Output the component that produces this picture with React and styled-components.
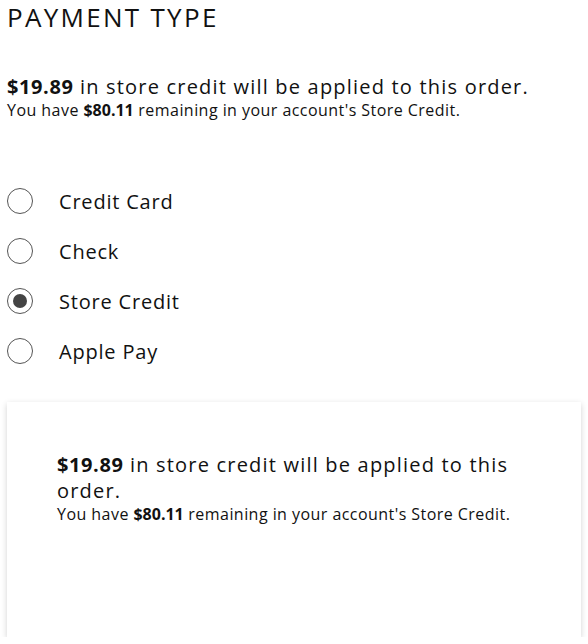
import React from "react";
import styled, { createGlobalStyle } from "styled-components";

const Global = createGlobalStyle`
  html, body { margin: 0; padding: 0; background: #fff; }
  body { font-family: "Open Sans", "Noto Sans", Arial, sans-serif; color: #111; }
`;

const Page = styled.div`
  padding: 0 7px;
  width: 588px;
  box-sizing: border-box;
`;

const Title = styled.h1`
  margin: 0;
  padding-top: 1px;
  font-size: 26px;
  font-weight: 400;
  line-height: 32px;
  letter-spacing: 2.3px;
  color: #111;
`;

const Summary = styled.div`
  margin-top: ${(p) => p.$top || 0}px;
`;

const Lead = styled.p`
  margin: 0;
  font-size: 20px;
  font-weight: 500;
  line-height: 26px;
  letter-spacing: 1.2px;
  strong { font-weight: 700; letter-spacing: 0.6px; }
`;

const Sub = styled.p`
  margin: 0;
  font-size: 16px;
  font-weight: 400;
  line-height: 21px;
  letter-spacing: 0.45px;
  strong { font-weight: 700; letter-spacing: 0; }
`;

const Options = styled.div`
  margin-top: 67px;
  display: flex;
  flex-direction: column;
  gap: 24px;
`;

const Option = styled.label`
  display: flex;
  align-items: center;
  gap: 26px;
  height: 26px;
  font-size: 20px;
  font-weight: 500;
  letter-spacing: 0.8px;
  cursor: pointer;
`;

const Radio = styled.span`
  box-sizing: border-box;
  width: 26px;
  height: 26px;
  border-radius: 50%;
  border: 1.5px solid #555;
  display: flex;
  align-items: center;
  justify-content: center;
  flex-shrink: 0;
  &::after {
    content: "";
    width: 14px;
    height: 14px;
    border-radius: 50%;
    background: #444;
    display: ${(p) => (p.$checked ? "block" : "none")};
  }
`;

const Card = styled.div`
  margin-top: 38px;
  height: 235px;
  box-sizing: border-box;
  padding: 50px 50px;
  background: #fff;
  box-shadow: 0 2px 6px rgba(0, 0, 0, 0.18);
`;

const options = [
  { label: "Credit Card", checked: false },
  { label: "Check", checked: false },
  { label: "Store Credit", checked: true },
  { label: "Apple Pay", checked: false },
];

function CreditNote() {
  return (
    <>
      <Lead>
        <strong>$19.89</strong> in store credit will be applied to this order.
      </Lead>
      <Sub>
        You have <strong>$80.11</strong> remaining in your account's Store Credit.
      </Sub>
    </>
  );
}

export default function App() {
  return (
    <Page>
      <Global />
      <Title>PAYMENT TYPE</Title>
      <Summary $top={41}>
        <CreditNote />
      </Summary>
      <Options>
        {options.map((o) => (
          <Option key={o.label}>
            <Radio $checked={o.checked} />
            {o.label}
          </Option>
        ))}
      </Options>
      <Card>
        <CreditNote />
      </Card>
    </Page>
  );
}
